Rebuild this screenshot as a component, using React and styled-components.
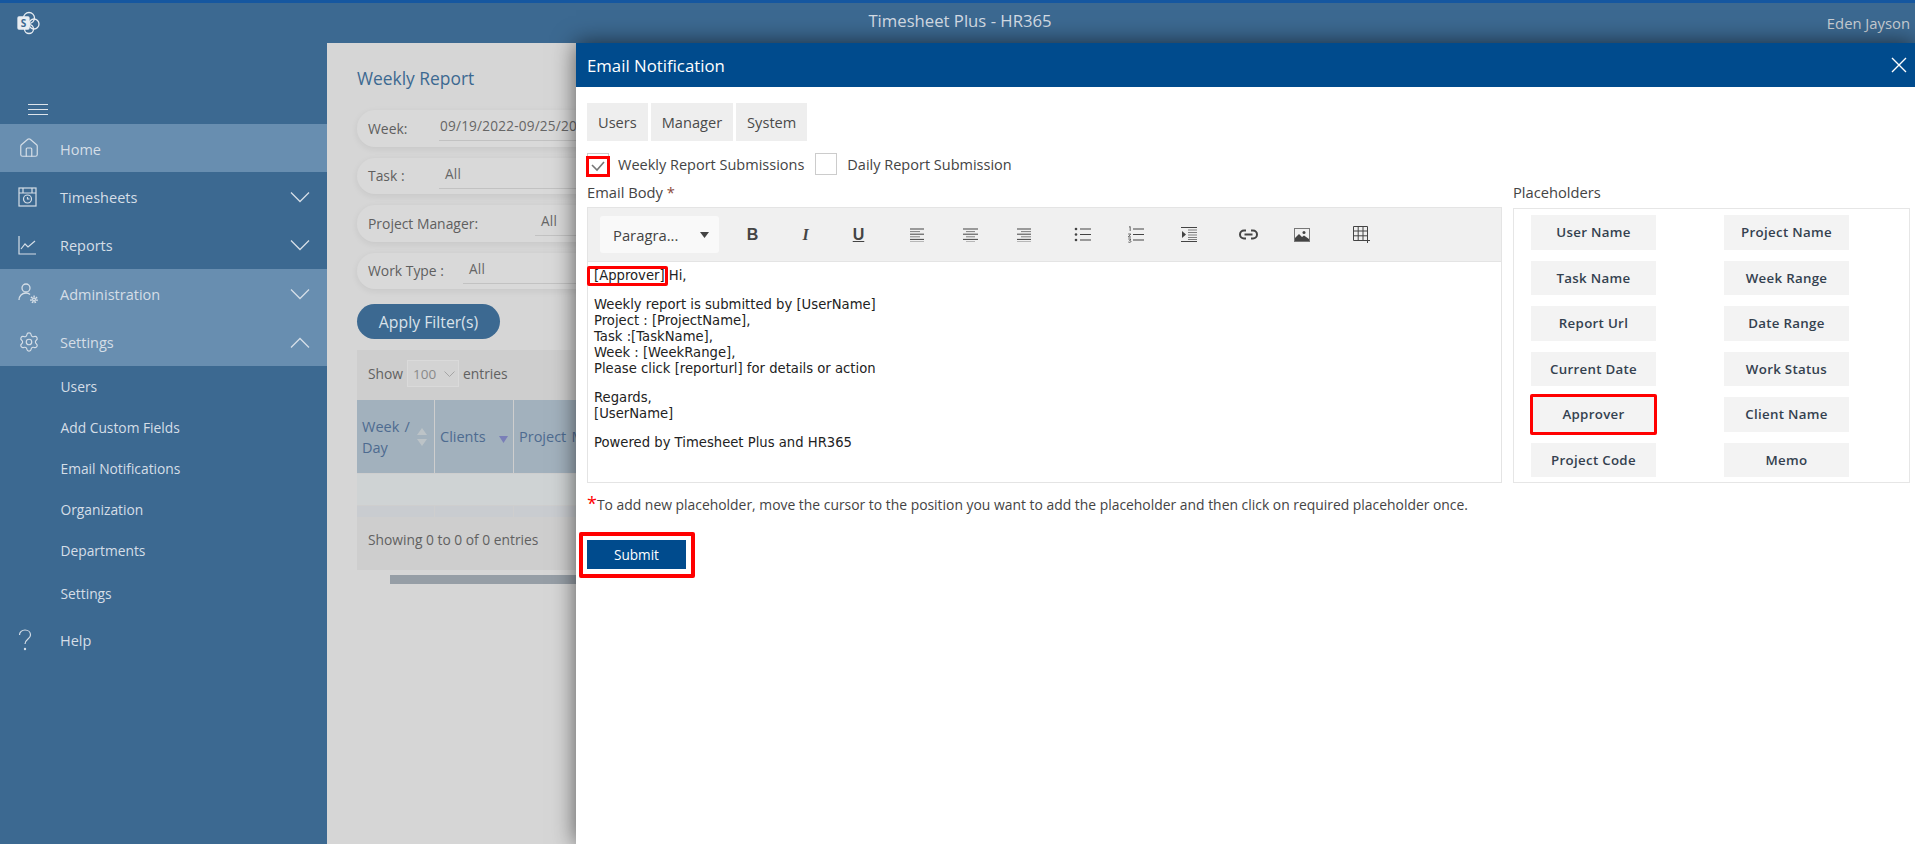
import React from 'react'
import styled, { createGlobalStyle } from 'styled-components'
import { House, Settings } from 'lucide-react'

const GlobalStyle = createGlobalStyle`
  html, body {
    margin: 0;
    padding: 0;
    height: 100%;
    overflow: hidden;
    background: #d6d6d6;
    font-family: "Open Sans", "Noto Sans", sans-serif;
  }
  * { box-sizing: border-box; }
`

const Page = styled.div`
  position: relative;
  width: 1915px;
  height: 844px;
  overflow: hidden;
  display: flex;
  flex-direction: column;
`

const Header = styled.header`
  height: 43px;
  flex: none;
  display: flex;
  align-items: center;
  justify-content: space-between;
  position: relative;
  padding: 0 5px 0 17px;
  background: #3c6991;
  border-top: 3px solid #1557a0;
`

const HeaderTitle = styled.div`
  position: absolute;
  left: 5px;
  right: 0;
  top: 6px;
  text-align: center;
  font-size: 16.7px;
  color: #d3dbe3;
`

const UserName = styled.div`
  font-size: 14.8px;
  color: #c9ced3;
`

const Main = styled.div`
  flex: 1;
  display: flex;
  min-height: 0;
`

const Sidebar = styled.nav`
  width: 327px;
  flex: none;
  background: #3c6991;
  color: #d5dee7;
`

const MenuButton = styled.div`
  height: 81px;
  padding: 61px 0 0 28px;
  display: flex;
  flex-direction: column;
  gap: 4px;
  span {
    width: 20px;
    height: 1px;
    background: #dde4eb;
  }
`

const MenuRow = styled.div`
  height: 48.4px;
  margin-top: ${props => props.$offset || 0}px;
  display: flex;
  align-items: center;
  padding: 2px 17px 0 18px;
  font-size: 14.5px;
  background: ${props => (props.$light ? '#688eb0' : 'transparent')};
`

const MenuIcon = styled.span`
  width: 42px;
  flex: none;
  display: flex;
  align-items: center;
  position: relative;
  top: -1px;
`

const MenuLabel = styled.span`
  flex: 1;
`

const SubRow = styled.div`
  height: 41.1px;
  margin-top: ${props => props.$offset || 0}px;
  display: flex;
  align-items: center;
  padding-left: 60.5px;
  font-size: 13.8px;
`

const Content = styled.main`
  width: 249px;
  flex: none;
  overflow: hidden;
  background: #d6d6d6;
  padding: 22px 0 0 30px;
`

const PageTitle = styled.h2`
  margin: 0 0 19px;
  height: 26px;
  font-size: 17.4px;
  line-height: 26px;
  font-weight: 500;
  color: #3c6991;
`

const FilterPill = styled.div`
  width: 240px;
  height: 36.5px;
  margin-bottom: 11px;
  padding-left: 11px;
  display: flex;
  align-items: center;
  border-radius: 18px 0 0 18px;
  background: #d9d9d9;
  box-shadow: 0 2px 7px rgba(0, 0, 0, 0.07);
  font-size: 13.9px;
  color: #5f5f5f;
`

const FilterLabel = styled.span`
  width: ${props => props.$width}px;
  flex: none;
`

const FilterValue = styled.span`
  flex: 1;
  height: 26px;
  line-height: 22px;
  padding-left: ${props => props.$pad}px;
  overflow: hidden;
  font-size: 13.6px;
  letter-spacing: 0.2px;
  color: #666;
  white-space: nowrap;
  border-bottom: 1px solid #c2c2c2;
`

const ApplyButton = styled.button`
  display: block;
  width: 143px;
  height: 35px;
  margin: 15px 0 11px;
  padding: 0;
  border: none;
  border-radius: 18px;
  background: #3c6991;
  color: #d9e2ea;
  font-family: inherit;
  font-size: 15.8px;
`

const TablePanel = styled.section`
  width: 219px;
  overflow: hidden;
  background: #cecece;
  font-size: 13.8px;
  color: #616161;
`

const LengthBar = styled.div`
  height: 50px;
  padding: 0 0 3px 11px;
  display: flex;
  align-items: center;
  gap: 4px;
`

const LengthSelect = styled.div`
  width: 52px;
  height: 27px;
  padding: 0 3px 0 5px;
  display: flex;
  align-items: center;
  justify-content: space-between;
  border: 1px solid #dadada;
  background: #d3d3d3;
  color: #8a8a8a;
  font-size: 13.5px;
`

const TableRow = styled.div`
  display: grid;
  grid-template-columns: 77px 78px 1fr;
  column-gap: 1px;
  height: ${props => props.$height}px;
  margin-bottom: 1px;
`

const HeadCell = styled.div`
  position: relative;
  display: flex;
  align-items: center;
  overflow: hidden;
  padding-left: 5px;
  background: #a2b1bd;
  color: #4e6b90;
  font-size: 14.5px;
  line-height: 21px;
  word-spacing: 1.5px;
  white-space: nowrap;
`

const SortMark = styled.svg`
  position: absolute;
  right: ${props => props.$right}px;
  top: ${props => props.$top}px;
`

const BodyCell = styled.div`
  grid-column: ${props => (props.$wide ? '1 / 4' : 'auto')};
  background: ${props => props.$tone};
`

const TableFooter = styled.div`
  height: 52px;
  padding: 0 0 9px 11px;
  display: flex;
  align-items: center;
`

const ScrollBar = styled.div`
  width: 186px;
  height: 9px;
  margin: 5px 0 0 33px;
  background: #969ea6;
`

const Modal = styled.aside`
  position: absolute;
  left: 576px;
  right: 0;
  top: 43px;
  bottom: 0;
  background: #fff;
  box-shadow: 0 0 22px rgba(0, 0, 0, 0.6);
`

const ModalHeader = styled.div`
  height: 44px;
  padding: 0 8px 0 11px;
  display: flex;
  align-items: center;
  justify-content: space-between;
  background: #004b8d;
  color: #fff;
  font-size: 16.8px;
`

const ModalBody = styled.div`
  padding: 16px 5px 0 11px;
`

const Tabs = styled.div`
  display: flex;
  gap: 3px;
`

const Tab = styled.div`
  height: 38px;
  padding: 0 11px;
  display: flex;
  align-items: center;
  background: #eee;
  color: #4a4a4a;
  font-size: 14.6px;
`

const CheckRow = styled.div`
  height: 22px;
  margin-top: 12px;
  display: flex;
  align-items: center;
  font-size: 14.5px;
  color: #444;
`

const CheckBox = styled.span`
  position: relative;
  width: 22px;
  height: 22px;
  flex: none;
  margin-right: ${props => props.$gap}px;
  display: flex;
  align-items: center;
  justify-content: center;
  border: 1px solid #ccc;
  svg {
    margin-top: 5px;
  }
  &::after {
    content: ${props => (props.$marked ? '""' : 'none')};
    position: absolute;
    left: -2px;
    right: -2px;
    top: 2px;
    bottom: -3px;
    border: 3.5px solid #f00;
  }
`

const CheckText = styled.span`
  margin-right: ${props => props.$gap}px;
`

const Columns = styled.div`
  display: grid;
  grid-template-columns: 915px 397px;
  column-gap: 11px;
  margin-top: 9px;
`

const FieldLabel = styled.div`
  height: 23px;
  font-size: 14.7px;
  line-height: 17px;
  color: #444;
  b {
    font-weight: 400;
    color: #8b4a3a;
  }
`

const Toolbar = styled.div`
  height: 55px;
  padding-left: 12px;
  display: flex;
  align-items: center;
  background: #f0f0f0;
  border: 1px solid #e4e4e4;
`

const FormatSelect = styled.div`
  width: 119px;
  height: 37px;
  margin-right: 7px;
  padding: 0 10px 0 13px;
  display: flex;
  align-items: center;
  justify-content: space-between;
  border-radius: 3px;
  background: #f9f9f9;
  color: #444;
  font-size: 14.8px;
`

const ToolButton = styled.span`
  width: 53px;
  flex: none;
  display: flex;
  justify-content: center;
  margin-left: ${props => props.$gap || 0}px;
  color: #444;
`

const Glyph = styled.span`
  font-family: ${props => (props.$italic ? '"Liberation Serif"' : '"Liberation Sans"')}, sans-serif;
  font-size: 16px;
  line-height: 20px;
  font-weight: 700;
  font-style: ${props => (props.$italic ? 'italic' : 'normal')};
  text-decoration: ${props => (props.$under ? 'underline' : 'none')};
`

const Editor = styled.div`
  height: 221px;
  padding: 6px 6px 0;
  border: 1px solid #e4e4e4;
  border-top: none;
  font-family: "DejaVu Sans", Verdana, sans-serif;
  font-size: 13.2px;
  line-height: 16px;
  color: #222;
  p {
    margin: 0 0 13px;
  }
`

const Marked = styled.span`
  position: relative;
  &::after {
    content: "";
    position: absolute;
    left: -7px;
    right: -3px;
    top: -2px;
    bottom: -3px;
    border: 3px solid #f00;
    border-radius: 2px;
  }
`

const PlaceholderBox = styled.div`
  height: 275px;
  margin-top: 1px;
  padding: 6px 0 0 17px;
  display: grid;
  grid-template-columns: 125px 125px;
  grid-auto-rows: 34.5px;
  column-gap: 68px;
  row-gap: 11px;
  border: 1px solid #e6e6e6;
`

const PlaceholderButton = styled.div`
  position: relative;
  display: flex;
  align-items: center;
  justify-content: center;
  background: #f3f3f3;
  color: #34414f;
  font-size: 13.3px;
  font-weight: 600;
  letter-spacing: 0.3px;
  &::after {
    content: ${props => (props.$marked ? '""' : 'none')};
    position: absolute;
    inset: -3px -1px;
    border: 3px solid #f00;
    border-radius: 2px;
  }
`

const Hint = styled.div`
  height: 57px;
  padding-top: 12px;
  font-size: 13.9px;
  color: #444;
  b {
    font-weight: 400;
    font-size: 18px;
    line-height: 14px;
    color: #f00;
  }
`

const SubmitButton = styled.button`
  position: relative;
  display: block;
  width: 99px;
  height: 29px;
  padding: 0;
  border: none;
  background: #004b8d;
  color: #fff;
  font-family: inherit;
  font-size: 13.6px;
  font-weight: 500;
  &::after {
    content: "";
    position: absolute;
    inset: -8px -9px -9px -8px;
    border: 4px solid #f00;
    border-radius: 2px;
  }
`

const Logo = () => (
  <svg width="24" height="24" viewBox="0 0 24 24" fill="none" stroke="#e8edf2" strokeWidth="1.3">
    <circle cx="12" cy="7" r="5.5" />
    <circle cx="17" cy="13" r="5" />
    <circle cx="12" cy="18" r="4.5" />
    <rect x="1" y="6" width="11" height="12" rx="1" fill="#e8edf2" />
    <text x="6.5" y="15.5" textAnchor="middle" fontFamily="Open Sans" fontSize="10" fontWeight="700" fill="#3c6991" stroke="none">S</text>
  </svg>
)

const SheetIcon = () => (
  <svg width="19" height="20" viewBox="0 0 19 20" fill="none" stroke="#d5dee7" strokeWidth="1.2">
    <rect x="1" y="1" width="17" height="18" />
    <path d="M5 1v5h9V1M1 6h4M14 6h4" />
    <circle cx="9.5" cy="12" r="4" />
    <path d="M9.5 10v2h2" />
  </svg>
)

const ChartIcon = () => (
  <svg width="19" height="20" viewBox="0 0 19 20" fill="none" stroke="#d5dee7" strokeWidth="1.2">
    <path d="M1 1v18h17" />
    <path d="M3 14l4-5 3 3 7-6" />
  </svg>
)

const AdminIcon = () => (
  <svg width="21" height="22" viewBox="0 0 21 22" fill="none" stroke="#d5dee7" strokeWidth="1.3">
    <circle cx="8" cy="6" r="4" />
    <path d="M1 18c0-4 3-7 7-7 2 0 3 .5 4 1.500" />
    <circle cx="16" cy="17.500" r="2.800" strokeWidth="2.200" strokeDasharray="1.400 1.050" />
    <circle cx="16" cy="17.500" r="2" fill="#d5dee7" stroke="none" />
    <circle cx="16" cy="17.500" r=".8" fill="#688eb0" stroke="none" />
  </svg>
)

const HelpIcon = () => (
  <svg width="14" height="22" viewBox="0 0 14 22" fill="none" stroke="#d5dee7" strokeWidth="1.2">
    <path d="M1.500 6c0-3 2.500-5 5.500-5s5.500 2 5.500 5c0 4-5.500 4-5.500 9" />
    <circle cx="7" cy="20" r=".6" />
  </svg>
)

const Chevron = ({ up }) => (
  <svg width="20" height="11" viewBox="0 0 20 11" fill="none" stroke="#d5dee7" strokeWidth="1.3">
    <path d={up ? 'M1 10.500l9-9 9 9' : 'M1 .5l9 9 9-9'} />
  </svg>
)

const CloseIcon = () => (
  <svg width="16" height="16" viewBox="0 0 16 16" fill="none" stroke="#fff" strokeWidth="1.4">
    <path d="M1 1l14 14M15 1L1 15" />
  </svg>
)

const IconAlign = ({ rows }) => (
  <svg width="15" height="14" viewBox="0 0 15 14" stroke="currentColor" strokeWidth="1">
    {rows.map((r, i) => <path key={i} d={`M${r[0]} ${i * 2.6 + 1}H${r[1]}`} opacity={i % 2 ? 0.65 : 1} />)}
  </svg>
)

const IconBullets = () => (
  <svg width="17" height="15" viewBox="0 0 17 15" fill="currentColor" stroke="currentColor">
    <circle cx="2" cy="2" r="1.300" stroke="none" />
    <circle cx="2" cy="7.500" r="1.300" stroke="none" />
    <circle cx="2" cy="13" r="1.300" stroke="none" />
    <path d="M6 2h11M6 7.500h11M6 13h11" />
  </svg>
)

const IconNumbers = () => (
  <svg width="17" height="18" viewBox="0 0 17 18" fill="currentColor" stroke="currentColor">
    <path d="M2 1.200l1.200-.7v4.500M1.200 8h2.600L1.300 11h2.700M1.300 13h2.600l-1.300 1.500c1 0 1.500.5 1.300 1.200-.2.800-1.700.8-2.600.3" fill="none" strokeWidth=".8" />
    <path d="M6 3h11M6 8.500h11M6 14h11" />
  </svg>
)

const IconIndent = () => (
  <svg width="16" height="15" viewBox="0 0 16 15" fill="currentColor" stroke="currentColor">
    <path d="M0 .5h16M0 14.500h16" />
    <path d="M7 3h9M7 5.500h9M7 8h9M7 10.500h9M7 12.500h9" opacity="0.65" />
    <path d="M1 4l4 3.500-4 3.500z" stroke="none" />
  </svg>
)

const IconLink = () => (
  <svg width="19" height="11" viewBox="0 0 19 11" fill="none" stroke="currentColor" strokeWidth="2">
    <path d="M7 1.500H5a4 4 0 000 8h2M12 1.500h2a4 4 0 010 8h-2M5.500 5.500h8" />
  </svg>
)

const IconImage = () => (
  <svg width="16" height="14" viewBox="0 0 16 14" fill="currentColor">
    <rect x=".5" y=".5" width="15" height="13" fill="none" stroke="#777" />
    <circle cx="10" cy="4.500" r="1.500" />
    <path d="M1 13V10l4-4 3 3 2-1.500 5 3.500V13z" />
  </svg>
)

const IconTable = () => (
  <svg width="18" height="17" viewBox="0 0 18 17" fill="none" stroke="currentColor">
    <path d="M.5.5h14v14H.5zM.5 5h14M.5 9.800h14M5.200.5v14M10 .5v14" />
    <path d="M14.500 12v5M12 14.500h5" strokeWidth="1" />
  </svg>
)

const menu = [
  { label: 'Home', icon: <House size={22} strokeWidth={1.3} />, light: true },
  { label: 'Timesheets', icon: <SheetIcon />, chevron: 'down' },
  { label: 'Reports', icon: <ChartIcon />, chevron: 'down' },
  { label: 'Administration', icon: <AdminIcon />, chevron: 'down', light: true },
  { label: 'Settings', icon: <Settings size={22} strokeWidth={1.3} />, chevron: 'up', light: true },
]

const subMenu = ['Users', 'Add Custom Fields', 'Email Notifications', 'Organization', 'Departments', 'Settings']

const filters = [
  { label: 'Week:', width: 71, value: '09/19/2022-09/25/2022', pad: 1 },
  { label: 'Task :', width: 71, value: 'All', pad: 6 },
  { label: 'Project Manager:', width: 167, value: 'All', pad: 6 },
  { label: 'Work Type :', width: 95, value: 'All', pad: 6 },
]

const placeholders = [
  'User Name', 'Project Name', 'Task Name', 'Week Range', 'Report Url', 'Date Range',
  'Current Date', 'Work Status', 'Approver', 'Client Name', 'Project Code', 'Memo',
]

const App = () => {
  return (
    <Page>
      <GlobalStyle />
      <Header>
        <Logo />
        <HeaderTitle>Timesheet Plus - HR365</HeaderTitle>
        <UserName>Eden Jayson</UserName>
      </Header>
      <Main>
        <Sidebar>
          <MenuButton><span /><span /><span /></MenuButton>
          {menu.map(item => (
            <MenuRow key={item.label} $light={item.light}>
              <MenuIcon>{item.icon}</MenuIcon>
              <MenuLabel>{item.label}</MenuLabel>
              {item.chevron && <Chevron up={item.chevron === 'up'} />}
            </MenuRow>
          ))}
          {subMenu.map(item => (
            <SubRow key={item} $offset={item === 'Settings' ? 2 : 0}>{item}</SubRow>
          ))}
          <MenuRow $offset={1}>
            <MenuIcon><HelpIcon /></MenuIcon>
            <MenuLabel>Help</MenuLabel>
          </MenuRow>
        </Sidebar>
        <Content>
          <PageTitle>Weekly Report</PageTitle>
          {filters.map(f => (
            <FilterPill key={f.label}>
              <FilterLabel $width={f.width}>{f.label}</FilterLabel>
              <FilterValue $pad={f.pad}>{f.value}</FilterValue>
            </FilterPill>
          ))}
          <ApplyButton>Apply Filter(s)</ApplyButton>
          <TablePanel>
            <LengthBar>
              <span>Show</span>
              <LengthSelect>
                100
                <svg width="11" height="6" viewBox="0 0 11 6" fill="none" stroke="#a5a5a5"><path d="M.5.5l5 5 5-5" /></svg>
              </LengthSelect>
              <span>entries</span>
            </LengthBar>
            <TableRow $height={73}>
              <HeadCell>
                <span>Week /<br />Day</span>
                <SortMark $right={7} $top={28} width="10" height="18" viewBox="0 0 10 18" fill="#bcc3c7">
                  <path d="M5 0l5 7H0zM5 18l5-7H0z" />
                </SortMark>
              </HeadCell>
              <HeadCell>
                <span>Clients</span>
                <SortMark $right={5} $top={36} width="9" height="7" viewBox="0 0 9 7" fill="#7a7fb8">
                  <path d="M0 0h9L4.500 7z" />
                </SortMark>
              </HeadCell>
              <HeadCell>Project M</HeadCell>
            </TableRow>
            <TableRow $height={31}>
              <BodyCell $wide $tone="#cfd3d4" />
            </TableRow>
            <TableRow $height={11}>
              <BodyCell $tone="#c9ccd0" />
              <BodyCell $tone="#c9ccd0" />
              <BodyCell $tone="#c9ccd0" />
            </TableRow>
            <TableFooter>Showing 0 to 0 of 0 entries</TableFooter>
          </TablePanel>
          <ScrollBar />
        </Content>
      </Main>
      <Modal>
        <ModalHeader>
          Email Notification
          <CloseIcon />
        </ModalHeader>
        <ModalBody>
          <Tabs>
            <Tab>Users</Tab>
            <Tab>Manager</Tab>
            <Tab>System</Tab>
          </Tabs>
          <CheckRow>
            <CheckBox $marked $gap={9}>
              <svg width="14" height="11" viewBox="0 0 14 11" fill="none" stroke="#777" strokeWidth="1.6">
                <path d="M1 4l5 5 7-8" />
              </svg>
            </CheckBox>
            <CheckText $gap={11}>Weekly Report Submissions</CheckText>
            <CheckBox $gap={10} />
            <CheckText>Daily Report Submission</CheckText>
          </CheckRow>
          <Columns>
            <div>
              <FieldLabel>Email Body <b>*</b></FieldLabel>
              <Toolbar>
                <FormatSelect>
                  Paragra...
                  <svg width="9" height="6" viewBox="0 0 9 6" fill="#444"><path d="M0 0h9L4.500 6z" /></svg>
                </FormatSelect>
                <ToolButton><Glyph>B</Glyph></ToolButton>
                <ToolButton><Glyph $italic>I</Glyph></ToolButton>
                <ToolButton><Glyph $under>U</Glyph></ToolButton>
                <ToolButton $gap={6}><IconAlign rows={[[0, 14], [0, 10], [0, 14], [0, 10], [0, 14], [0, 14]]} /></ToolButton>
                <ToolButton><IconAlign rows={[[0, 15], [3, 12], [0, 15], [3, 12], [0, 15], [3, 12]]} /></ToolButton>
                <ToolButton><IconAlign rows={[[1, 15], [5, 15], [1, 15], [5, 15], [1, 15], [1, 15]]} /></ToolButton>
                <ToolButton $gap={6}><IconBullets /></ToolButton>
                <ToolButton><IconNumbers /></ToolButton>
                <ToolButton><IconIndent /></ToolButton>
                <ToolButton $gap={7}><IconLink /></ToolButton>
                <ToolButton><IconImage /></ToolButton>
                <ToolButton $gap={7}><IconTable /></ToolButton>
              </Toolbar>
              <Editor>
                <p><Marked>[Approver]</Marked> Hi,</p>
                <p>
                  Weekly report is submitted by [UserName]<br />
                  Project : [ProjectName],<br />
                  Task :[TaskName],<br />
                  Week : [WeekRange],<br />
                  Please click [reporturl] for details or action
                </p>
                <p>Regards,<br />[UserName]</p>
                <p>Powered by Timesheet Plus and HR365</p>
              </Editor>
            </div>
            <div>
              <FieldLabel>Placeholders</FieldLabel>
              <PlaceholderBox>
                {placeholders.map(name => (
                  <PlaceholderButton key={name} $marked={name === 'Approver'}>{name}</PlaceholderButton>
                ))}
              </PlaceholderBox>
            </div>
          </Columns>
          <Hint><b>*</b>To add new placeholder, move the cursor to the position you want to add the placeholder and then click on required placeholder once.</Hint>
          <SubmitButton>Submit</SubmitButton>
        </ModalBody>
      </Modal>
    </Page>
  )
}

export default App
